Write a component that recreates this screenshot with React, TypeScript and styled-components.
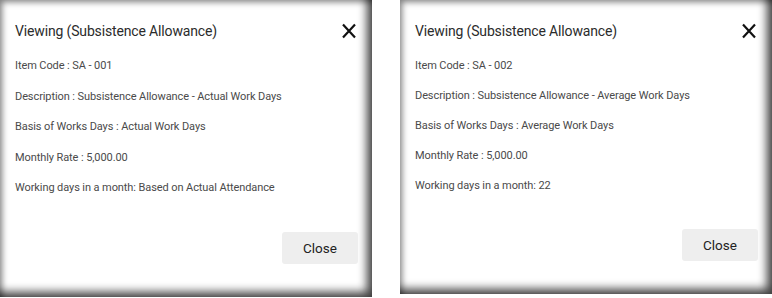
import * as React from 'react';
import styled, { createGlobalStyle } from 'styled-components';

type TField = { label: string; value: string; sep?: string };

type TItem = {
  code: string;
  fields: TField[];
  height: number;
  rowGap: number;
};

const GlobalStyle = createGlobalStyle`
  html, body {
    margin: 0;
    padding: 0;
    background: #ffffff;
  }
  body {
    font-family: Roboto, 'Noto Sans', sans-serif;
  }
`;

const Page = styled.div`
  display: flex;
  flex-direction: row;
  align-items: flex-start;
  gap: 28px;
  width: 772px;
`;

const Modal = styled.div<{ $height: number }>`
  width: 372px;
  height: ${(p) => p.$height}px;
  box-sizing: border-box;
  padding: 20px 14px 33px 15px;
  background: #ffffff;
  display: flex;
  flex-direction: column;
  box-shadow: inset 4px 4px 6px -2px rgba(0, 0, 0, 0.5),
    inset -9px -9px 10px -4px rgba(0, 0, 0, 0.75);
`;

const Header = styled.div`
  display: flex;
  align-items: center;
  justify-content: space-between;
  height: 22px;
`;

const Title = styled.h3`
  margin: 0;
  font-size: 14px;
  font-weight: 400;
  color: #2b2b2b;
  letter-spacing: -0.15px;
`;

const CloseX = styled.button`
  border: 0;
  background: none;
  padding: 0;
  margin-right: 1px;
  width: 16px;
  height: 16px;
  display: flex;
  cursor: pointer;
`;

const Fields = styled.div<{ $gap: number }>`
  display: flex;
  flex-direction: column;
  gap: ${(p) => p.$gap}px;
  margin-top: 16px;
`;

const Field = styled.p`
  margin: 0;
  font-size: 11px;
  line-height: 16px;
  color: #4a4a4a;
  letter-spacing: -0.09px;
`;

const Footer = styled.div`
  margin-top: auto;
  display: flex;
  justify-content: flex-end;
`;

const CloseButton = styled.button`
  width: 76px;
  height: 32px;
  border: 0;
  border-radius: 3px;
  background: #eeeeee;
  color: #222;
  font-family: Roboto, 'Noto Sans', sans-serif;
  font-size: 13.5px;
  cursor: pointer;
`;

const items: TItem[] = [
  {
    code: 'SA - 001',
    height: 297,
    rowGap: 14.5,
    fields: [
      { label: 'Item Code', value: 'SA - 001' },
      { label: 'Description', value: 'Subsistence Allowance - Actual Work Days' },
      { label: 'Basis of Works Days', value: 'Actual Work Days' },
      { label: 'Monthly Rate', value: '5,000.00' },
      { label: 'Working days in a month', value: 'Based on Actual Attendance', sep: ': ' },
    ],
  },
  {
    code: 'SA - 002',
    height: 294,
    rowGap: 14,
    fields: [
      { label: 'Item Code', value: 'SA - 002' },
      { label: 'Description', value: 'Subsistence Allowance - Average Work Days' },
      { label: 'Basis of Works Days', value: 'Average Work Days' },
      { label: 'Monthly Rate', value: '5,000.00' },
      { label: 'Working days in a month', value: '22', sep: ': ' },
    ],
  },
];

const XIcon = () => (
  <svg width="16" height="16" viewBox="0 0 16 16">
    <path d="M2 1.5 L14 14.5 M14 1.5 L2 14.5" stroke="#111" strokeWidth="2.2" strokeLinecap="butt" />
  </svg>
);

export default function App() {
  return (
    <>
      <GlobalStyle />
      <Page>
        {items.map((item) => (
          <Modal key={item.code} $height={item.height}>
            <Header>
              <Title>Viewing (Subsistence Allowance)</Title>
              <CloseX aria-label="close">
                <XIcon />
              </CloseX>
            </Header>
            <Fields $gap={item.rowGap}>
              {item.fields.map((f) => (
                <Field key={f.label}>
                  {f.label}
                  {f.sep ?? ' : '}
                  {f.value}
                </Field>
              ))}
            </Fields>
            <Footer>
              <CloseButton>Close</CloseButton>
            </Footer>
          </Modal>
        ))}
      </Page>
    </>
  );
}
